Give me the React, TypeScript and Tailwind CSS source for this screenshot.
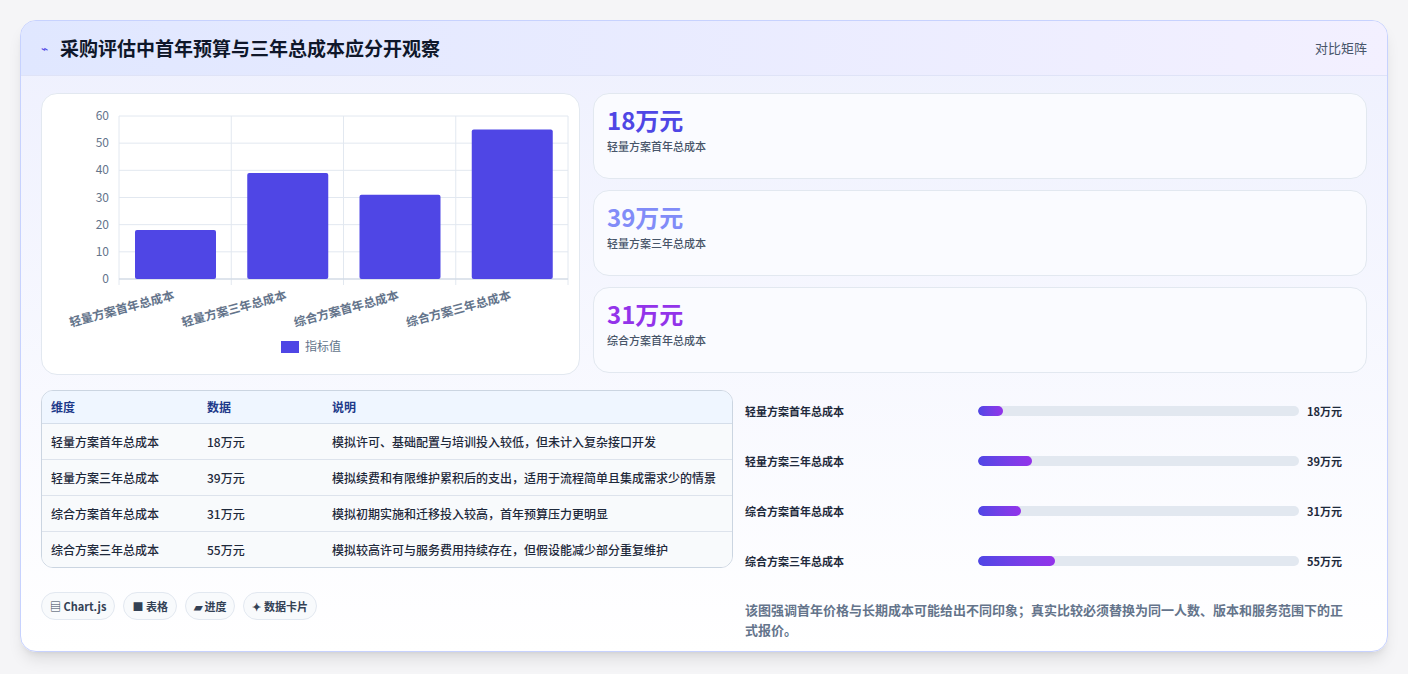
import React from 'react'

const FONT = { fontFamily: '"Noto Sans CJK SC", "Noto Sans", sans-serif' }

const ROWS = [
  { name: '轻量方案首年总成本', v: 18, note: '模拟许可、基础配置与培训投入较低，但未计入复杂接口开发' },
  { name: '轻量方案三年总成本', v: 39, note: '模拟续费和有限维护累积后的支出，适用于流程简单且集成需求少的情景' },
  { name: '综合方案首年总成本', v: 31, note: '模拟初期实施和迁移投入较高，首年预算压力更明显' },
  { name: '综合方案三年总成本', v: 55, note: '模拟较高许可与服务费用持续存在，但假设能减少部分重复维护' },
]

function Chart() {
  // plot area inside the chart box (box origin at 40,93)
  const x0 = 77, x1 = 526, yTop = 22, yBot = 185
  const step = (x1 - x0) / 4
  const yv = (v: number) => yBot - (v / 60) * (yBot - yTop)
  return (
    <svg width="536" height="279" style={FONT}>
      {[0, 10, 20, 30, 40, 50, 60].map(t => (
        <g key={t}>
          <line x1={x0} x2={x1} y1={yv(t)} y2={yv(t)} stroke="#e2e8f0" />
          <text x={x0 - 10} y={yv(t) + 4} textAnchor="end" fontSize="12" fill="#64748b">{t}</text>
        </g>
      ))}
      {[0, 1, 2, 3, 4].map(i => (
        <line key={i} x1={x0 + i * step} x2={x0 + i * step} y1={yTop} y2={yBot + 6} stroke="#e2e8f0" />
      ))}
      <line x1={x0} x2={x1} y1={yBot} y2={yBot} stroke="#cbd5e1" />
      {ROWS.map((r, i) => (
        <g key={r.name}>
          <rect x={x0 + i * step + 16} y={yv(r.v)} width={81} height={yBot - yv(r.v)} rx="2" fill="#4f46e5" />
          <text transform={`translate(${x0 + i * step + 56},${yBot + 20}) rotate(-15)`} textAnchor="end" fontSize="12" fontWeight="600" fill="#64748b">{r.name}</text>
        </g>
      ))}
      <rect x="239" y="247" width="18" height="12" fill="#4f46e5" />
      <text x="263" y="257" fontSize="12" fill="#64748b">指标值</text>
    </svg>
  )
}

const STATS = [
  { v: '18万元', label: '轻量方案首年总成本', color: 'text-[#4f46e5]' },
  { v: '39万元', label: '轻量方案三年总成本', color: 'text-[#818cf8]' },
  { v: '31万元', label: '综合方案首年总成本', color: 'text-[#9333ea]' },
]

export default function App() {
  return (
    <div className="w-[1408px] h-[674px] bg-[#f5f5f7] pt-[20px] pl-[20px]" style={FONT}>
      <div className="w-[1368px] h-[632px] rounded-2xl border border-[#c7d2fe] bg-gradient-to-b from-[#eef0fe] to-white shadow-lg overflow-hidden">
        <div className="h-[55px] flex items-center justify-between px-5 bg-gradient-to-r from-[#e0e7ff] to-[#f3f0ff] border-b border-[#dfe3f7]">
          <div className="flex items-center gap-3">
            <span className="text-[#4f46e5] text-xs">⌁</span>
            <h1 className="text-[19px] font-bold text-[#0f172a]">采购评估中首年预算与三年总成本应分开观察</h1>
          </div>
          <span className="text-[13px] text-[#475569]">对比矩阵</span>
        </div>
        <div className="px-5 pt-[17px] flex gap-[13px]">
          <div className="w-[539px] h-[282px] rounded-2xl bg-white border border-[#e2e8f0]">
            <Chart />
          </div>
          <div className="flex-1 flex flex-col gap-[11px]">
            {STATS.map(s => (
              <div key={s.v} className="h-[86px] rounded-2xl bg-[#fafbff] border border-[#e2e8f0] px-[13px] pt-[8px]">
                <div className={`text-[24px] font-bold leading-[36px] ${s.color}`}>{s.v}</div>
                <div className="text-[11px] text-[#475569] font-medium">{s.label}</div>
              </div>
            ))}
          </div>
        </div>
        <div className="px-5 pt-[15px] flex gap-[12px]">
          <div className="w-[692px]">
            <div className="rounded-xl border border-[#cbd5e1] overflow-hidden text-[12px] text-[#1e293b] font-medium">
              <div className="flex bg-[#eff6ff] h-[33px] items-center border-b border-[#d5deea] text-[#1e3a8a] font-semibold">
                <div className="w-[165px] pl-[9px]">维度</div>
                <div className="w-[125px]">数据</div>
                <div className="flex-1">说明</div>
              </div>
              {ROWS.map((r, i) => (
                <div key={r.name} className={`flex py-[9px] leading-[17px] bg-[#f8fafc] ${i < 3 ? 'border-b border-[#dde3ec]' : ''}`}>
                  <div className="w-[165px] pl-[9px]">{r.name}</div>
                  <div className="w-[125px]">{r.v}万元</div>
                  <div className="flex-1 pr-3">{r.note}</div>
                </div>
              ))}
            </div>
            <div className="flex gap-2 mt-[24px] text-[11px] font-semibold text-[#334155]">
              {['▤ Chart.js', '■ 表格', '▰ 进度', '✦ 数据卡片'].map(c => (
                <span key={c} className="h-[28px] px-[8px] flex items-center rounded-full border border-[#e2e8f0] bg-[#f8fafc]">{c}</span>
              ))}
            </div>
          </div>
          <div className="flex-1 pl-[0px] pr-[20px]">
            <div className="flex flex-col gap-[32px] pt-[12px]">
              {ROWS.map(r => (
                <div key={r.name} className="flex items-center h-[18px] text-[11px] font-semibold text-[#1e293b]">
                  <div className="w-[233px]">{r.name}</div>
                  <div className="w-[321px] h-[10px] rounded-full bg-[#e2e8f0] overflow-hidden">
                    <div className="h-full rounded-full bg-gradient-to-r from-[#4f46e5] to-[#9333ea]" style={{ width: `${(r.v / 230) * 100}%` }} />
                  </div>
                  <div className="pl-[8px]">{r.v}万元</div>
                </div>
              ))}
            </div>
            <p className="mt-[30px] text-[13px] leading-[20px] font-semibold text-[#64748b]">该图强调首年价格与长期成本可能给出不同印象；真实比较必须替换为同一人数、版本和服务范围下的正式报价。</p>
          </div>
        </div>
      </div>
    </div>
  )
}
